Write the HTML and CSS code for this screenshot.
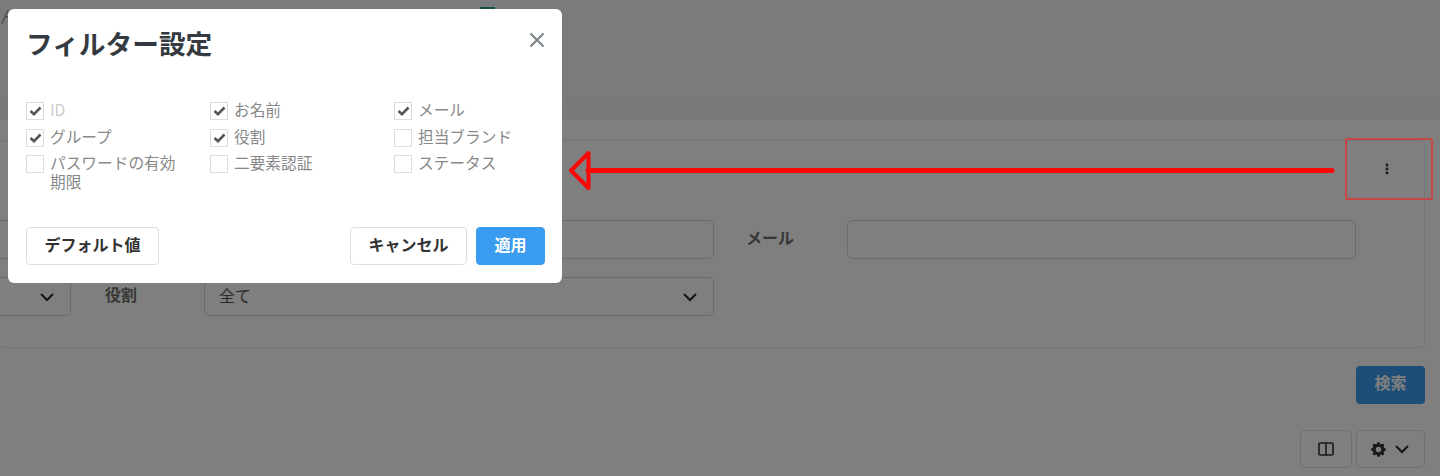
FILE: index.html
```html
<!DOCTYPE html>
<html lang="ja">
<head>
<meta charset="utf-8">
<title>フィルター設定</title>
<link rel="stylesheet" href="styles.css">
</head>
<body>
<div class="page">
  <header class="top">
    <p class="notice"><span>ん、ユーザーの一覧を確認し、必要な項目を選択します</span><span class="notice-mark"></span></p>
  </header>
  <div class="band"></div>
  <section class="card">
    <div class="card-head">
      <svg class="dots" width="4" height="12" viewBox="0 0 4 12"><circle cx="2" cy="2" r="1.4"/><circle cx="2" cy="6" r="1.4"/><circle cx="2" cy="10" r="1.4"/></svg>
    </div>
    <div class="filters">
      <div class="field field-first"></div>
      <div class="flabel">お名前</div>
      <div class="field"></div>
      <div class="flabel flabel-mail">メール</div>
      <div class="field"></div>
      <div class="field field-first select">
        <svg class="chev" width="16" height="10" viewBox="0 0 16 10"><path d="M2 2l6 6 6-6"/></svg>
      </div>
      <div class="flabel">役割</div>
      <div class="field select">
        <span class="value">全て</span>
        <svg class="chev" width="16" height="10" viewBox="0 0 16 10"><path d="M2 2l6 6 6-6"/></svg>
      </div>
    </div>
  </section>
  <div class="search-row"><button class="search">検索</button></div>
  <div class="tools">
    <button class="tool tool-col">
      <svg width="16" height="14" viewBox="0 0 16 14"><rect x="1" y="1" width="14" height="12" rx="1"/><path d="M8 1v12"/></svg>
    </button>
    <button class="tool tool-gear">
      <svg class="gear" width="15" height="15" viewBox="0 0 16 16"><path d="M9.405 1.05c-.413-1.4-2.397-1.4-2.81 0l-.1.34a1.464 1.464 0 0 1-2.105.872l-.31-.17c-1.283-.698-2.686.705-1.987 1.987l.169.311c.446.82.023 1.841-.872 2.105l-.34.1c-1.4.413-1.4 2.397 0 2.81l.34.1a1.464 1.464 0 0 1 .872 2.105l-.17.31c-.698 1.283.705 2.686 1.987 1.987l.311-.169a1.464 1.464 0 0 1 2.105.872l.1.34c.413 1.4 2.397 1.4 2.81 0l.1-.34a1.464 1.464 0 0 1 2.105-.872l.31.17c1.283.698 2.686-.705 1.987-1.987l-.169-.311a1.464 1.464 0 0 1 .872-2.105l.34-.1c1.4-.413 1.4-2.397 0-2.81l-.34-.1a1.464 1.464 0 0 1-.872-2.105l.17-.31c.698-1.283-.705-2.686-1.987-1.987l-.311.169a1.464 1.464 0 0 1-2.105-.872l-.1-.34zM8 10.93a2.929 2.929 0 1 1 0-5.86 2.929 2.929 0 0 1 0 5.858z"/></svg>
      <svg class="chev" width="16" height="10" viewBox="0 0 16 10"><path d="M2 2l6 6 6-6"/></svg>
    </button>
  </div>
</div>

<div class="backdrop"></div>

<svg class="annot" width="1440" height="476" viewBox="0 0 1440 476">
  <rect class="annot-box" x="1346" y="139" width="86" height="60" rx="1"/>
  <path class="annot-line" d="M1332 170.500H588"/>
  <path class="annot-head" d="M588.500 153L571 170.500L588.500 188Z"/>
</svg>

<div class="modal">
  <div class="modal-head">
    <h2 class="modal-title">フィルター設定</h2>
    <svg class="close" width="16" height="16" viewBox="0 0 16 16"><path d="M1.500 1.500l13 13M14.500 1.500l-13 13"/></svg>
  </div>
  <div class="opts">
    <label class="opt muted"><span class="box"><svg width="13" height="10" viewBox="0 0 13 10"><path d="M1.500 5l3.500 3.200 6.500-6.700"/></svg></span><span class="opt-text">ID</span></label>
    <label class="opt"><span class="box"><svg width="13" height="10" viewBox="0 0 13 10"><path d="M1.500 5l3.500 3.200 6.500-6.700"/></svg></span><span class="opt-text">お名前</span></label>
    <label class="opt"><span class="box"><svg width="13" height="10" viewBox="0 0 13 10"><path d="M1.500 5l3.500 3.200 6.500-6.700"/></svg></span><span class="opt-text">メール</span></label>
    <label class="opt"><span class="box"><svg width="13" height="10" viewBox="0 0 13 10"><path d="M1.500 5l3.500 3.200 6.500-6.700"/></svg></span><span class="opt-text">グループ</span></label>
    <label class="opt"><span class="box"><svg width="13" height="10" viewBox="0 0 13 10"><path d="M1.500 5l3.500 3.200 6.500-6.700"/></svg></span><span class="opt-text">役割</span></label>
    <label class="opt"><span class="box"></span><span class="opt-text">担当ブランド</span></label>
    <label class="opt"><span class="box"></span><span class="opt-text">パスワードの有効期限</span></label>
    <label class="opt"><span class="box"></span><span class="opt-text">二要素認証</span></label>
    <label class="opt"><span class="box"></span><span class="opt-text">ステータス</span></label>
  </div>
  <div class="modal-foot">
    <button class="btn btn-default">デフォルト値</button>
    <div class="foot-right">
      <button class="btn btn-cancel">キャンセル</button>
      <button class="btn btn-apply">適用</button>
    </div>
  </div>
</div>
</body>
</html>
```
FILE: styles.css
```css
* { box-sizing: border-box; }
html, body { margin: 0; height: 476px; overflow: hidden; }
body {
  position: relative;
  background: #fff;
  font-family: "Noto Sans CJK JP", "Noto Sans", sans-serif;
  font-size: 16px;
  color: #666;
}
button { font-family: inherit; }

.page { height: 476px; overflow: hidden; }

.top {
  height: 98px;
  background: #f5f6f8;
  border-bottom: 1px solid #e8eaec;
  overflow: hidden;
}
.notice {
  display: flex;
  align-items: flex-start;
  margin: 0;
  padding-top: 6px;
  white-space: nowrap;
  line-height: 20px;
  color: #999;
}
.notice-mark {
  width: 15px;
  height: 12px;
  margin: 1px 0 0 80px;
  background: #2f9c95;
}
.band { height: 22px; background: #f3f5f7; }

.card {
  margin: 20px 15px 0 -1px;
  height: 208px;
  background: #fff;
  border: 1px solid #e8eaec;
  border-radius: 3px;
}
.card-head {
  height: 79px;
  padding: 22px 35px 0 0;
  display: flex;
  justify-content: flex-end;
  align-items: flex-start;
}
.dots { fill: #333; }

.filters {
  display: grid;
  grid-template-columns: 71px 133px 510px 133px 509px;
  grid-auto-rows: 39px;
  row-gap: 18px;
}
.field {
  border: 1px solid #d4d7da;
  border-radius: 5px;
  background: #fff;
}
.field-first { margin-left: -12px; }
.select {
  display: flex;
  align-items: center;
  justify-content: space-between;
  padding: 0 15px 0 14px;
}
.field-first.select { justify-content: flex-end; }
.value { color: #555; padding-bottom: 3px; }
.flabel {
  padding: 0 0 5px 34px;
  display: flex;
  align-items: center;
  font-weight: 700;
  color: #6e6e6e;
}
.flabel-mail { padding-left: 32px; }
.chev { fill: none; stroke: #2a2a2a; stroke-width: 2; }

.search-row {
  display: flex;
  justify-content: flex-end;
  padding: 18px 15px 0 0;
}
.search {
  width: 69px;
  height: 38px;
  padding: 0 0 6px;
  border: 0;
  border-radius: 4px;
  background: #3a9cf0;
  color: #fff;
  font-size: 16px;
  font-weight: 700;
}
.tools {
  display: flex;
  justify-content: flex-end;
  gap: 4px;
  padding: 26px 15px 0 0;
}
.tool {
  height: 38px;
  background: #fff;
  border: 1px solid #dcdfe2;
  border-radius: 5px;
  display: flex;
  align-items: center;
  justify-content: center;
  padding: 0;
}
.tool-col { width: 52px; }
.tool-col svg { fill: none; stroke: #333; stroke-width: 1.6; }
.tool-gear { width: 69px; gap: 8px; }
.gear { fill: #333; }

.backdrop {
  position: absolute;
  inset: 0;
  background: rgba(0, 0, 0, .5);
}

.annot { position: absolute; left: 0; top: 0; }
.annot-box { fill: none; stroke: #c84646; stroke-width: 2; }
.annot-line { fill: none; stroke: #fb0707; stroke-width: 5; stroke-linecap: round; }
.annot-head { fill: none; stroke: #fb0707; stroke-width: 4; stroke-linejoin: round; }

.modal {
  position: absolute;
  left: 8px;
  top: 9px;
  width: 554px;
  height: 274px;
  padding: 0 17px 18px 18px;
  background: #fff;
  border-radius: 6px;
  display: flex;
  flex-direction: column;
}
.modal-head {
  height: 93px;
  display: flex;
  justify-content: space-between;
  align-items: flex-start;
  flex: none;
}
.modal-title {
  margin: 0;
  padding-top: 16px;
  font-size: 26.7px;
  line-height: 36px;
  font-weight: 700;
  color: #343a40;
}
.close {
  margin: 23px 0 0 0;
  fill: none;
  stroke: #7a8288;
  stroke-width: 2;
}
.opts {
  display: grid;
  grid-template-columns: repeat(3, 184px);
  grid-auto-rows: minmax(26.500px, auto);
  align-content: start;
  flex: 1;
}
.opt {
  display: flex;
  align-items: flex-start;
  gap: 6px;
  font-size: 15.700px;
  line-height: 19px;
  color: #888;
  max-width: 165px;
}
.opt-text { margin-top: -2px; }
.opt.muted { color: #ccc; }
.box {
  flex: none;
  width: 18px;
  height: 18px;
  border: 1px solid #ddd;
  background: #fff;
  display: flex;
  align-items: center;
  justify-content: center;
}
.box svg { fill: none; stroke: #555; stroke-width: 2.600; }

.modal-foot {
  display: flex;
  justify-content: space-between;
  flex: none;
}
.foot-right { display: flex; gap: 9px; }
.btn {
  height: 38px;
  border-radius: 4px;
  font-size: 16px;
  font-weight: 700;
  padding: 0 0 4px;
  background: #fff;
  border: 1px solid #dcdfe2;
  color: #333;
}
.btn-default { width: 133px; }
.btn-cancel { width: 117px; }
.btn-apply { width: 69px; background: #3a9cf0; border-color: #3a9cf0; color: #fff; }
```
